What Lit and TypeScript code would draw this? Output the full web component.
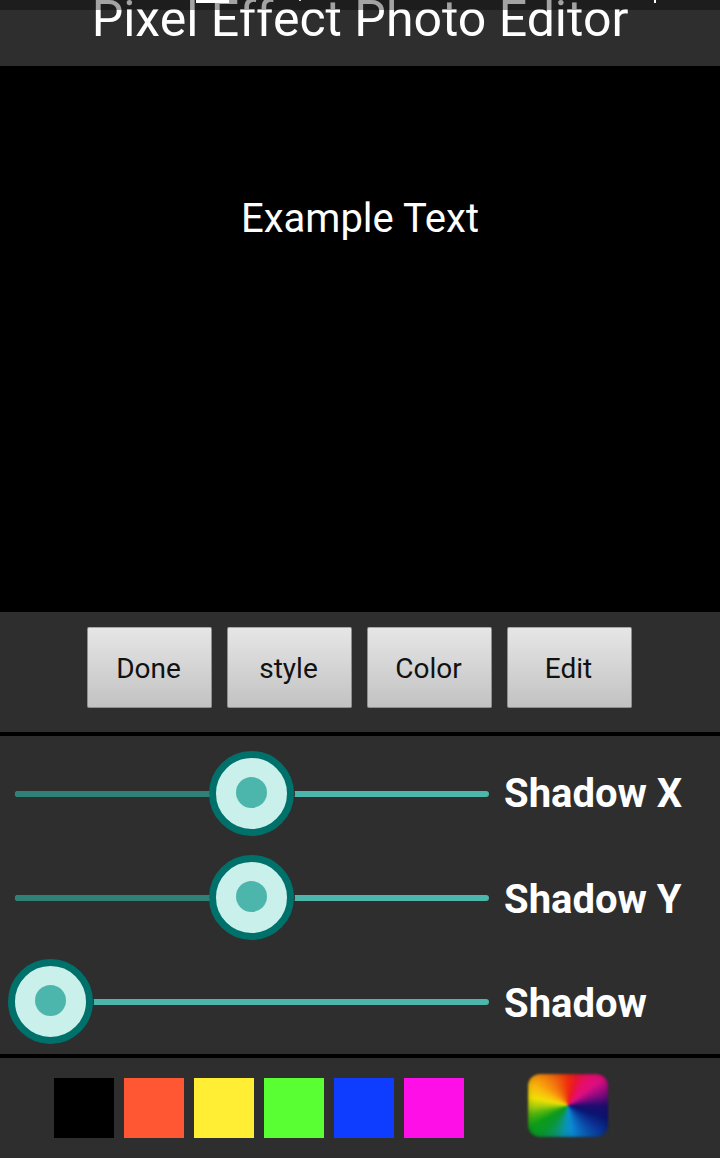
import { LitElement, html, css } from "lit";
import { customElement } from "lit/decorators.js";

const rainbow = "conic-gradient(from 0deg at 50% 50%, #f02c0c 0deg, #e81434 18deg, #e80e6a 34deg, #dc0e80 52deg, #a00a80 66deg, #6c0a7c 76deg, #200c70 90deg, #0a1470 108deg, #0a3496 128deg, #0a5cb4 148deg, #0a8cd4 172deg, #0a94a8 190deg, #0a9668 204deg, #0a9630 222deg, #0c9c18 240deg, #50b410 256deg, #a4cc0c 268deg, #f0e004 282deg, #f8bc0c 298deg, #f8960c 312deg, #f0700e 330deg, #f0480c 348deg, #f02c0c 360deg)";

@customElement("app-root")
export class AppRoot extends LitElement {
  static styles = css`
    :host { display: block; width: 720px; height: 1158px; background: #2e2e2e; font-family: Roboto, "Noto Sans", sans-serif; overflow: hidden; }
    .header { height: 66px; position: relative; background: #2e2e2e; overflow: hidden; display: flex; justify-content: center; }
    .status { position: absolute; inset: 0 0 auto 0; height: 10px; background: rgba(0,0,0,.36); }
    .dash { position: absolute; left: 196px; top: 0; width: 33px; height: 3px; background: #fff; }
    .tick { position: absolute; left: 654px; top: 0; width: 2px; height: 3px; background: #fff; }
    .dot { position: absolute; left: 299px; top: 0; width: 2px; height: 1px; background: #ddd; }
    .title { font-size: 50px; line-height: 48px; color: #fff; margin-top: -5px; white-space: nowrap; }
    .canvas { height: 546px; background: #000; display: flex; justify-content: center; padding-top: 129px; box-sizing: border-box; color: #fff; font-size: 40px; line-height: 48px; }
    .buttons { height: 120px; display: flex; justify-content: center; gap: 15px; padding: 15px 1px 0 0; box-sizing: border-box; }
    .btn { width: 125px; height: 81px; box-sizing: border-box; border-radius: 2px; padding: 2px 2px 0 0; background: linear-gradient(#e6e6e6, #c2c2c2); border: 1px solid #8f8f8f; border-top-color: #a8a8a8; color: #111; font-size: 28px; display: flex; align-items: center; justify-content: center; }
    .rule { height: 4px; background: #000; }
    .sliders { height: 318px; box-sizing: border-box; padding-top: 6px; }
    .row { height: 104px; position: relative; }
    .track { position: absolute; left: 15px; width: 474px; height: 6px; top: 49px; border-radius: 3px; background: #4db6ac; }
    .done { position: absolute; left: 15px; height: 6px; top: 49px; background: #2f8077; border-radius: 3px 0 0 3px; }
    .thumb { position: absolute; top: 9px; width: 85px; height: 85px; box-sizing: border-box; border-radius: 50%; background: #c9f0ea; border: 7px solid #00706b; display: flex; align-items: center; justify-content: center; box-shadow: 1px 0 0 0 #2e2e2e; }
    .thumb i { width: 31px; height: 31px; border-radius: 50%; background: #4db6ac; display: block; margin: -2px 0 0 -1px; }
    .label { position: absolute; left: 504px; color: #fff; font-size: 40px; font-weight: 700; line-height: 44px; white-space: nowrap; }
    .colors { position: relative; height: 100px; display: flex; gap: 10px; padding: 20px 0 0 54px; box-sizing: border-box; }
    .swatch { width: 60px; height: 60px; }
    .wheel { width: 80px; height: 63px; margin: -4px 0 0 54px; border-radius: 12px; filter: blur(.8px); box-shadow: inset 0 0 6px rgba(0,0,0,.25); }
  `;
  render() {
    const rows: [string, number, number][] = [["Shadow X", 209, 30], ["Shadow Y", 209, 32], ["Shadow", 8, 32]];
    const colors = ["#000000", "#ff5733", "#ffee33", "#5aff33", "#0f3dff", "#ff0fe8"];
    return html`
      <div class="header">
        <div class="title">Pixel Effect Photo Editor</div>
        <div class="status"><div class="dash"></div><div class="dot"></div><div class="tick"></div></div>
      </div>
      <div class="canvas">Example Text</div>
      <div class="buttons">
        ${["Done", "style", "Color", "Edit"].map((b) => html`<div class="btn">${b}</div>`)}
      </div>
      <div class="rule"></div>
      <div class="sliders">
        ${rows.map(([l, x, y]) => html`<div class="row">
          <div class="track"></div>
          <div class="done" style="width:${Math.max(0, x - 15)}px"></div>
          <div class="thumb" style="left:${x}px"><i></i></div>
          <div class="label" style="top:${y}px">${l}</div>
        </div>`)}
      </div>
      <div class="rule"></div>
      <div class="colors">
        ${colors.map((c) => html`<div class="swatch" style="background:${c}"></div>`)}
        <div class="wheel" style="background:${rainbow}"></div>
      </div>
    `;
  }
}
